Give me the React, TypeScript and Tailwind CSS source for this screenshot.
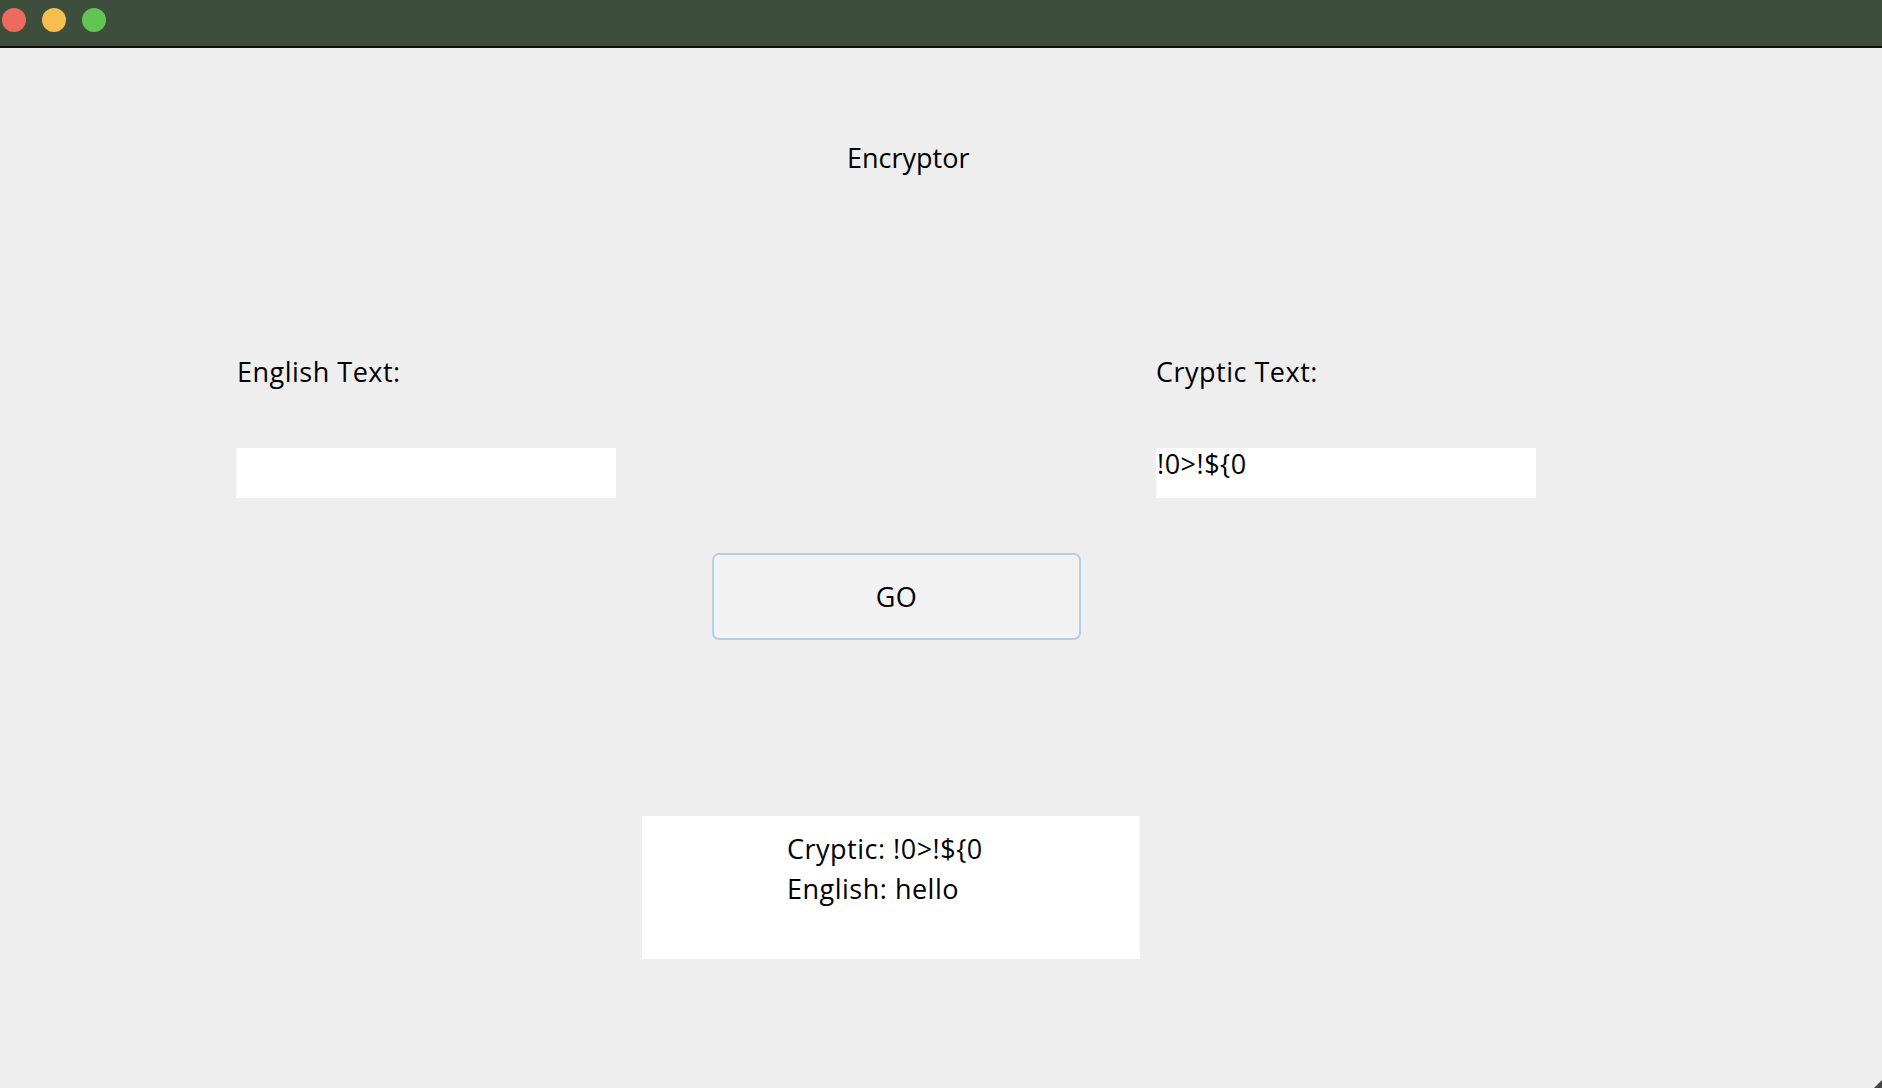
import React from 'react';

const font = { fontFamily: '"Open Sans", "DejaVu Sans", sans-serif' };

export default function App() {
  return (
    <div className="w-[1882px] h-[1088px] bg-[#eeeeee] flex flex-col overflow-hidden relative text-black tracking-[0.5px]" style={font}>
      {/* window title bar */}
      <div className="h-[48px] shrink-0 bg-[#3d4e3d] border-b-2 border-[#111111] flex items-start pt-2 gap-4 pl-[2px]">
        <span className="w-6 h-6 rounded-full bg-[#ee6a5f]" />
        <span className="w-6 h-6 rounded-full bg-[#f5bf4f]" />
        <span className="w-6 h-6 rounded-full bg-[#61c554]" />
      </div>

      <div className="flex flex-col">
        <div className="mt-[94px] ml-[847px] text-[27px] leading-8 tracking-normal">Encryptor</div>

        <div className="mt-[182px] pl-[237px] flex gap-[539px] text-[27px] leading-8">
          <div className="w-[380px]">English Text:</div>
          <div className="w-[380px]">Cryptic Text:</div>
        </div>

        <div className="mt-[60px] pl-[236px] flex gap-[540px]">
          <input className="w-[380px] h-[50px] bg-white outline-none text-[27px] leading-8 px-[1px]" style={font} defaultValue="" />
          <div className="w-[380px] h-[50px] bg-white text-[27px] leading-8 pl-[1px]">!0&gt;!${'{'}0</div>
        </div>

        <div className="mt-[55px] ml-[712px]">
          <button className="w-[369px] h-[87px] rounded-[7px] border-2 border-[#b3d0e8] bg-[#f2f2f2] text-[27px] leading-8" style={font}>
            GO
          </button>
        </div>

        <div className="mt-[176px] ml-[642px] w-[498px] h-[143px] bg-white pt-[13px] pl-[145px] text-[27px] leading-[40px]">
          <div>Cryptic: !0&gt;!${'{'}0</div>
          <div>English: hello</div>
        </div>
      </div>

      <svg className="absolute right-0 bottom-0" width="8" height="8" viewBox="0 0 8 8">
        <path d="M8 0 L8 8 L0 8 Z" fill="#444" />
      </svg>
    </div>
  );
}
